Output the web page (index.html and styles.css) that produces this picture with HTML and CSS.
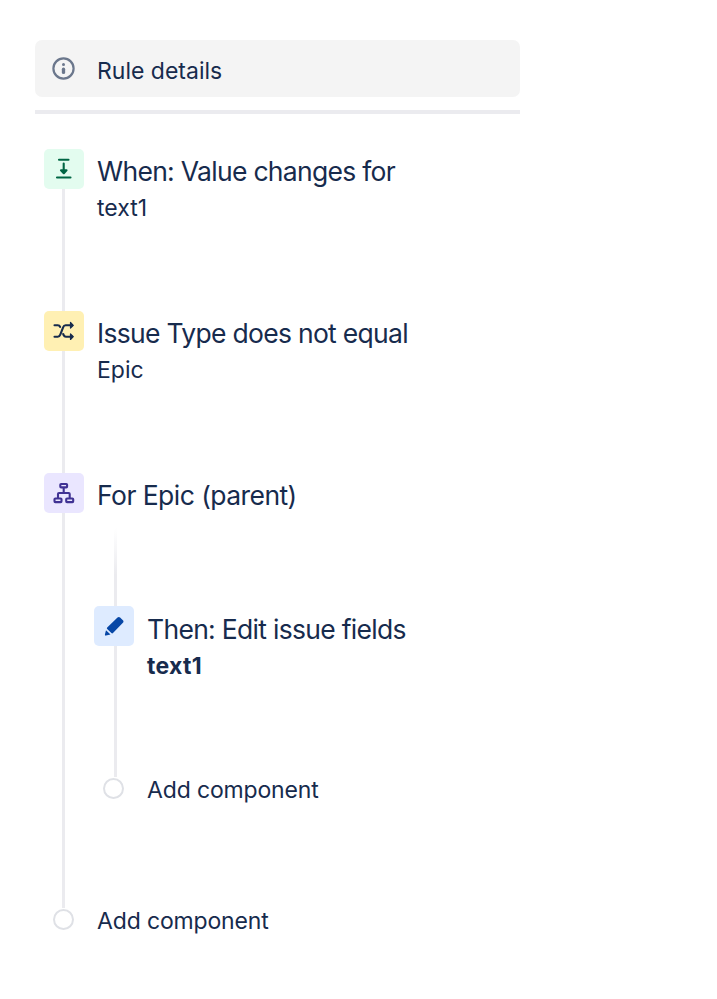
FILE: index.html
```html
<!DOCTYPE html>
<html lang="en">
<head>
  <meta charset="UTF-8" />
  <meta name="viewport" content="width=device-width, initial-scale=1.0"/>
  <title>Automation Rule</title>
  <link rel="stylesheet" href="styles.css">
</head>
<body>
  <main class="rule">
    <div class="rule-details">
      <svg class="info-icon" viewBox="0 0 24 24" fill="none">
        <circle cx="11.5" cy="11.5" r="10.1" stroke="#6b778c" stroke-width="2.2"/>
        <circle cx="11.5" cy="7.400" r="1.5" fill="#6b778c"/>
        <path d="M11.500 12.200v3.200" stroke="#6b778c" stroke-width="3.3" stroke-linecap="round"/>
      </svg>
      <span>Rule details</span>
    </div>
    <hr class="divider">

    <div class="step">
      <div class="rail">
        <div class="icon icon-trigger">
          <svg viewBox="0 0 40 40" fill="none" stroke="#006644" stroke-width="2.1" stroke-linecap="round" stroke-linejoin="round">
            <path d="M15 10.700h9.500M13 28.500h13.500M19.700 14.500v8"/>
            <path d="M17 21.200h5.500l-2.700 3z" fill="#006644"/>
          </svg>
        </div>
        <div class="line"></div>
      </div>
      <div class="text">
        <h2>When: Value changes for</h2>
        <p>text1</p>
      </div>
    </div>

    <div class="step">
      <div class="rail">
        <div class="icon icon-condition">
          <svg viewBox="0 0 40 40" fill="none" stroke="#172b4d" stroke-width="2.1" stroke-linecap="round" stroke-linejoin="round">
            <path d="M10.500 14.300h3.300c1.300 0 1.900.5 2.300 1.600M10.500 25.700h3.300c1.400 0 2-.7 2.500-2l2.800-7.400c.5-1.300 1.100-2 2.500-2h6M19.200 23l.4 1c.5 1.200 1.100 1.700 2.300 1.700h5.700"/>
            <path d="M26.500 11.500v5.600l2.800-2.800zM26.500 22.900v5.600l2.800-2.800z" fill="#172b4d" stroke-width="1.2"/>
          </svg>
        </div>
        <div class="line"></div>
      </div>
      <div class="text">
        <h2>Issue Type does not equal</h2>
        <p>Epic</p>
      </div>
    </div>

    <div class="step branch">
      <div class="rail">
        <div class="icon icon-branch">
          <svg viewBox="0 0 40 40" fill="none" stroke="#403294" stroke-width="2.1" stroke-linejoin="round">
            <rect x="16.300" y="11" width="6.800" height="3.400" rx=".8"/>
            <rect x="10.500" y="25.500" width="7" height="3.600" rx=".8"/>
            <rect x="22.200" y="25.500" width="7" height="3.600" rx=".8"/>
            <path d="M19.700 14.500v5.500M14 25.500v-4.500q0-1 1-1h9.700q1 0 1 1v4.500"/>
          </svg>
        </div>
        <div class="line"></div>
      </div>
      <div class="text">
        <h2 class="branch-title">For Epic (parent)</h2>
        <div class="children">
          <div class="line line-fade"></div>
          <div class="step child">
            <div class="rail">
              <div class="icon icon-action">
                <svg viewBox="0 0 40 40" fill="#0747a6">
                  <path d="M13.200 21.400l10.300-9.900c.8-.8 1.800-.8 2.600 0l2.800 2.800c.8.8.8 1.700 0 2.500l-9.900 10.200c-.5.500-1.100.5-1.600 0l-4.200-4c-.5-.5-.5-1.100 0-1.600z"/>
                  <path d="M12 24.300l4.500 4.300-4.500 1c-.8.200-1.200-.2-1.100-1z"/>
                </svg>
              </div>
              <div class="line"></div>
            </div>
            <div class="text">
              <h2>Then: Edit issue fields</h2>
              <p><strong>text1</strong></p>
            </div>
          </div>
          <div class="add">
            <span class="dot"></span>
            <span class="add-label">Add component</span>
          </div>
        </div>
      </div>
    </div>

    <div class="add">
      <span class="dot"></span>
      <span class="add-label">Add component</span>
    </div>
  </main>
</body>
</html>
```

FILE: styles.css
```css
body {
  margin: 0;
  background-color: #fff;
  color: #172b4d;
  font-family: Inter, sans-serif;
  font-size: 23px;
}

.rule {
  width: 485px;
  padding: 40px 0 60px 35px;
}

.rule-details {
  display: flex;
  align-items: center;
  height: 57px;
  padding-left: 17px;
  gap: 21px;
  background-color: #f4f4f4;
  border-radius: 7px;
}

.rule-details span {
  padding-top: 4px;
}

.info-icon {
  width: 24px;
  height: 24px;
}

.divider {
  height: 4px;
  margin: 13px 0 35px;
  border: none;
  background-color: #ebebef;
}

/* Steps */
.step {
  display: flex;
  gap: 13px;
  height: 162px;
  padding-left: 8px;
}

.rail {
  display: flex;
  flex-direction: column;
  align-items: center;
  width: 41px;
}

.icon {
  width: 40px;
  height: 40px;
  border-radius: 5px;
}

.icon svg {
  display: block;
  width: 40px;
  height: 40px;
}

.icon-trigger {
  background-color: #e3fcef;
}

.icon-condition {
  background-color: #fff0b3;
}

.icon-branch {
  background-color: #eae6ff;
}

.icon-action {
  background-color: #deebff;
}

.line {
  flex: 1;
  width: 3px;
  background-color: #ebebef;
}

.text {
  padding-top: 5px;
  white-space: nowrap;
}

h2 {
  margin: 0;
  font-size: 26.5px;
  font-weight: 400;
  line-height: 34px;
  letter-spacing: -0.7px;
}

.branch-title {
  letter-spacing: -0.55px;
}

p {
  margin: 5px 0 0;
  line-height: 30px;
}

p strong {
  letter-spacing: 0.3px;
}

/* Nested branch */
.branch {
  height: 435px;
}

.children {
  margin: 16px 0 0 -4px;
}

.line-fade {
  height: 78px;
  margin-left: 21px;
  background: linear-gradient(#fff, #ebebef 60%);
}

.child {
  height: 171px;
  padding-left: 0;
}

.child .line {
  margin-left: 3px;
}

.child .text {
  padding-top: 6px;
}

.add {
  display: flex;
  align-items: center;
  gap: 23px;
  height: 22px;
  padding-left: 18px;
}

.children .add {
  padding-left: 10px;
}

.add-label {
  padding-top: 4px;
  letter-spacing: -0.15px;
}

.dot {
  box-sizing: border-box;
  width: 21px;
  height: 21px;
  border: 2px solid #dfe1e6;
  border-radius: 50%;
}
```
